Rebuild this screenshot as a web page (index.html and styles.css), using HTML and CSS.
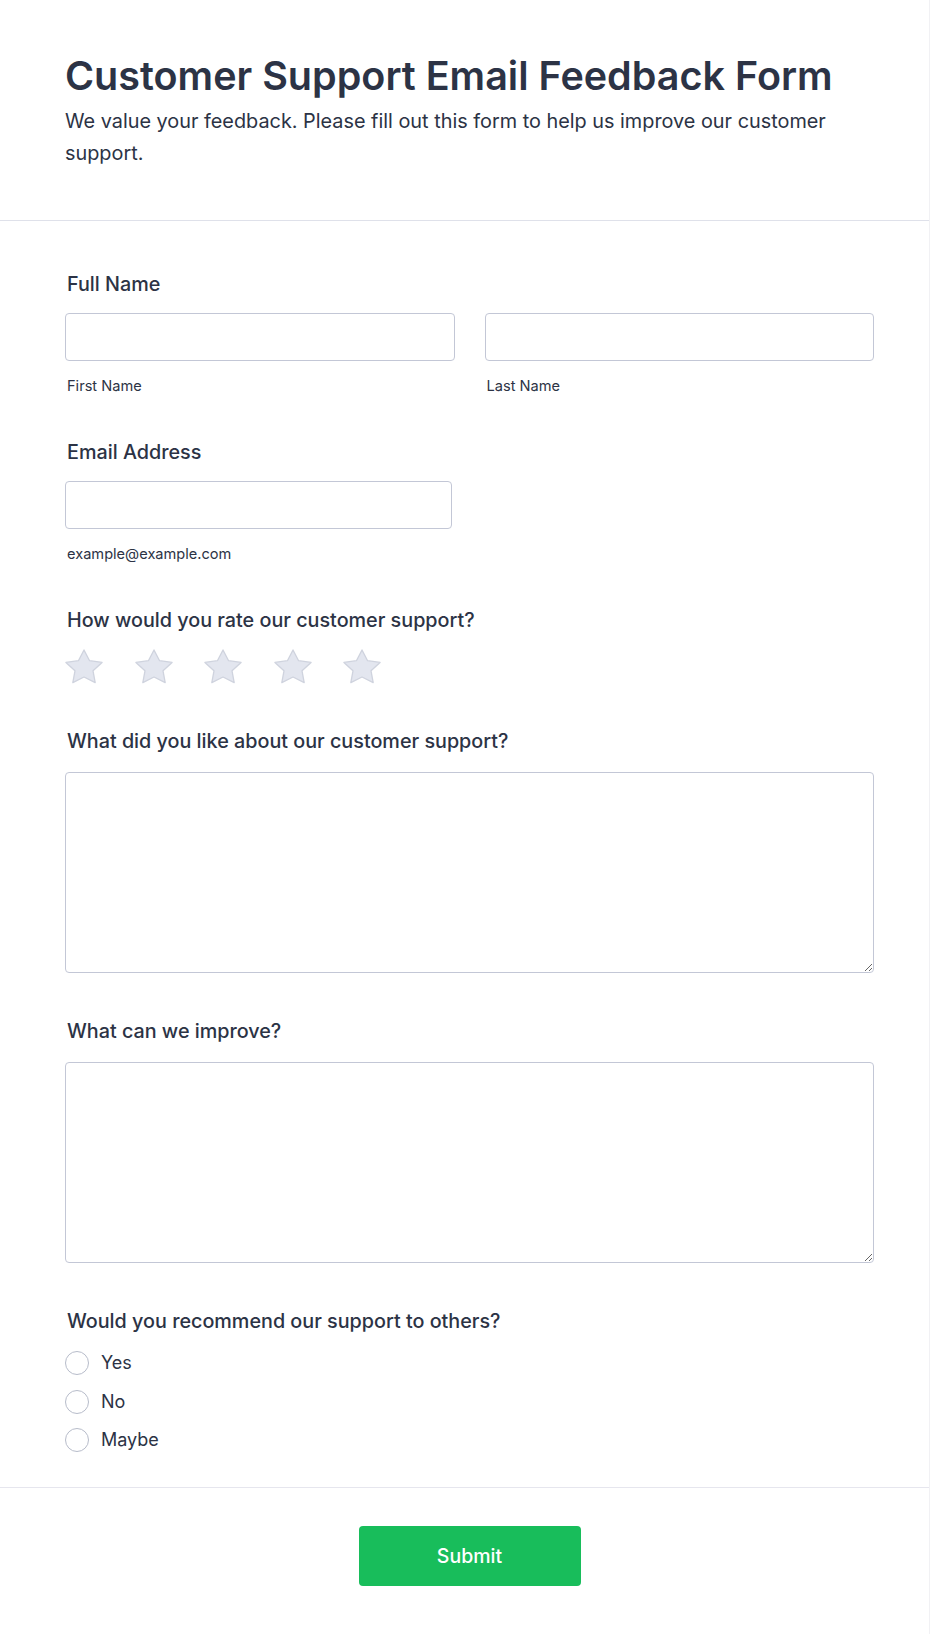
FILE: index.html
```html
<!DOCTYPE html>
<html lang="en">
<head>
<meta charset="utf-8">
<title>Customer Support Email Feedback Form</title>
<link rel="stylesheet" href="styles.css">
</head>
<body>
<form class="card">
  <header class="card-header">
    <h1 class="title">Customer Support Email Feedback Form</h1>
    <p class="subtitle">We value your feedback. Please fill out this form to help us improve our customer support.</p>
  </header>

  <div class="card-body">
    <div class="field">
      <label class="label">Full Name</label>
      <div class="name-row">
        <div class="name-col">
          <input class="input" type="text">
          <span class="sublabel">First Name</span>
        </div>
        <div class="name-col">
          <input class="input" type="text">
          <span class="sublabel">Last Name</span>
        </div>
      </div>
    </div>

    <div class="field">
      <label class="label">Email Address</label>
      <div class="email-col">
        <input class="input" type="email">
        <span class="sublabel">example@example.com</span>
      </div>
    </div>

    <div class="field field-rating">
      <label class="label">How would you rate our customer support?</label>
      <div class="stars">
        <svg class="star" viewBox="0 0 40 36" width="40" height="36"><polygon points="20,1.95 25.58,12.7 38.07,14.42 29.03,22.79 31.17,34.6 20,29.03 8.83,34.6 10.97,22.79 1.93,14.42 14.42,12.7"/></svg>
        <svg class="star" viewBox="0 0 40 36" width="40" height="36"><polygon points="20,1.95 25.58,12.7 38.07,14.42 29.03,22.79 31.17,34.6 20,29.03 8.83,34.6 10.97,22.79 1.93,14.42 14.42,12.7"/></svg>
        <svg class="star" viewBox="0 0 40 36" width="40" height="36"><polygon points="20,1.95 25.58,12.7 38.07,14.42 29.03,22.79 31.17,34.6 20,29.03 8.83,34.6 10.97,22.79 1.93,14.42 14.42,12.7"/></svg>
        <svg class="star" viewBox="0 0 40 36" width="40" height="36"><polygon points="20,1.95 25.58,12.7 38.07,14.42 29.03,22.79 31.17,34.6 20,29.03 8.83,34.6 10.97,22.79 1.93,14.42 14.42,12.7"/></svg>
        <svg class="star" viewBox="0 0 40 36" width="40" height="36"><polygon points="20,1.95 25.58,12.7 38.07,14.42 29.03,22.79 31.17,34.6 20,29.03 8.83,34.6 10.97,22.79 1.93,14.42 14.42,12.7"/></svg>
      </div>
    </div>

    <div class="field field-text">
      <label class="label">What did you like about our customer support?</label>
      <textarea class="textarea"></textarea>
    </div>

    <div class="field field-text">
      <label class="label">What can we improve?</label>
      <textarea class="textarea"></textarea>
    </div>

    <div class="field field-last">
      <label class="label">Would you recommend our support to others?</label>
      <div class="radios">
        <label class="radio"><span class="circle"></span><span>Yes</span></label>
        <label class="radio"><span class="circle"></span><span>No</span></label>
        <label class="radio"><span class="circle"></span><span>Maybe</span></label>
      </div>
    </div>
  </div>

  <footer class="card-footer">
    <button type="button" class="submit">Submit</button>
  </footer>
</form>
</body>
</html>
```

FILE: styles.css
```css
* { box-sizing: border-box; }

html, body {
  margin: 0;
  padding: 0;
  background: #ffffff;
}

body {
  font-family: Inter, "Noto Sans", "Liberation Sans", sans-serif;
  color: #2c3345;
}

.card {
  width: 930px;
  min-height: 1634px;
  border-right: 1px solid #f1f1f4;
  border-bottom: 1px solid #f1f1f4;
  display: flex;
  flex-direction: column;
}

.card-header {
  padding: 53px 55px 51px 65px;
  border-bottom: 1px solid #dfe1ea;
}

.title {
  margin: 0;
  font-size: 39.5px;
  line-height: 46px;
  font-weight: 600;
  letter-spacing: 0;
}

.subtitle {
  margin: 7px 0 0;
  font-size: 19.85px;
  line-height: 31.5px;
  font-weight: 400;
}

.card-body {
  padding: 51px 55px 35px 65px;
  display: flex;
  flex-direction: column;
  gap: 44px;
  border-bottom: 1px solid #e6e6ee;
}

.field {
  display: flex;
  flex-direction: column;
}

.field-text {
  margin-bottom: 2px;
}

.label {
  font-size: 19.75px;
  line-height: 24px;
  font-weight: 500;
  padding-left: 2px;
  margin-bottom: 17px;
}

.name-row {
  display: flex;
  gap: 30px;
}

.name-col {
  width: 390px;
  display: flex;
  flex-direction: column;
}

.email-col {
  width: 387px;
  display: flex;
  flex-direction: column;
}

.input {
  height: 48px;
  width: 100%;
  border: 1px solid #c3c7d6;
  border-radius: 4px;
  background: #fff;
  font: inherit;
}

.sublabel {
  margin-top: 15px;
  padding-left: 2px;
  font-size: 14.6px;
  line-height: 20px;
  color: #2c3345;
}

.field-rating .label {
  margin-bottom: 16px;
}

.stars {
  display: flex;
  gap: 29.5px;
  margin-left: -1px;
  margin-bottom: 1px;
}

.star polygon {
  fill: #e3e6ef;
  stroke: #cfd3de;
  stroke-width: 1.3;
  stroke-linejoin: round;
}

.textarea {
  width: 100%;
  height: 201px;
  margin-top: 2px;
  border: 1px solid #c3c7d6;
  border-radius: 4px;
  background: #fff;
  font: inherit;
  resize: vertical;
}

.radios {
  display: flex;
  flex-direction: column;
  gap: 14.5px;
  margin-top: 1px;
}

.radio {
  display: flex;
  align-items: center;
  gap: 12px;
  font-size: 18px;
  line-height: 24px;
  height: 24px;
}

.circle {
  width: 24px;
  height: 24px;
  border: 1px solid #b7bcca;
  border-radius: 50%;
  background: #fff;
  flex: none;
}

.card-footer {
  display: flex;
  justify-content: center;
  padding: 38px 55px 49px 65px;
}

.submit {
  width: 222px;
  height: 60px;
  border: 0;
  border-radius: 4px;
  background: #18bd5b;
  color: #fff;
  font-family: Inter, "Noto Sans", sans-serif;
  font-size: 19.5px;
  font-weight: 500;
  cursor: pointer;
}
```
